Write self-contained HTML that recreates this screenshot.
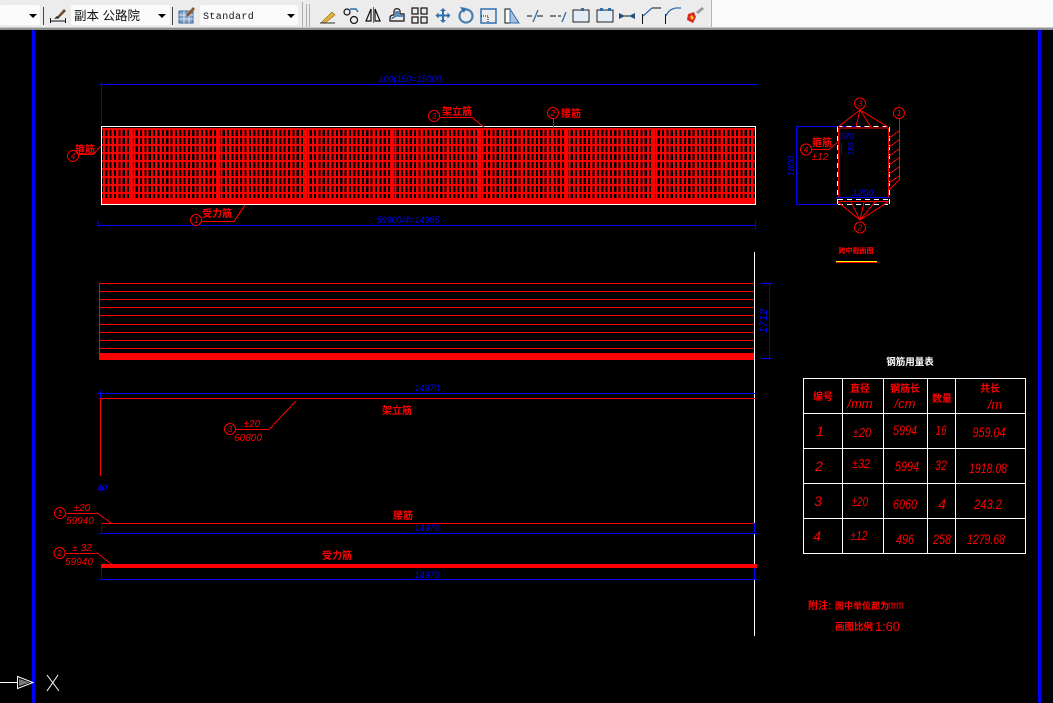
<!DOCTYPE html>
<html><head><meta charset="utf-8"><style>
html,body{margin:0;padding:0;background:#000;width:1053px;height:703px;overflow:hidden}
svg{display:block}
text{font-family:"Liberation Sans","Noto Sans CJK SC",sans-serif}
.cn{fill:#f00;font-weight:700;font-size:10px;text-anchor:middle}
.r{fill:#f00;font-style:italic;font-size:14px;text-anchor:middle}
.s{fill:#f00;font-style:italic;font-size:10px;text-anchor:middle}
.b{fill:#00f;font-style:italic;font-size:9px;text-anchor:middle}
.n{fill:none;stroke:#f00;stroke-width:1}
.bl{fill:none;stroke:#00f;stroke-width:1}
.w{fill:none;stroke:#fff;stroke-width:1}
.i{fill:none;stroke:#111;stroke-width:1.2}
.u{fill:none;stroke:#2f6fae;stroke-width:1.5}
</style></head><body>
<svg width="1053" height="703" viewBox="0 0 1053 703" xmlns="http://www.w3.org/2000/svg">
<rect width="1053" height="703" fill="#000"/>
<!-- toolbar -->
<rect width="1053" height="28" fill="#fafafa"/>
<rect width="712" height="27" fill="#ececec"/>
<rect x="711" y="0" width="1" height="27" fill="#b5b5b5"/>
<rect y="27" width="1053" height="1" fill="#c8c8c8"/>
<rect y="28" width="1053" height="2" fill="#8f8f8f"/>
<rect x="0" y="5" width="40" height="20" rx="2" fill="#fbfbfb"/>
<rect x="71" y="5" width="99" height="20" rx="2" fill="#fbfbfb"/>
<rect x="200" y="5" width="98" height="20" rx="2" fill="#fbfbfb"/>
<path d="M29 14h8l-4 4zM158 14h8l-4 4zM287 14h8l-4 4z" fill="#000"/>
<path d="M43.500 7v18M172.500 7v18" stroke="#444" fill="none"/>
<path d="M302.500 2v25M306.500 4v23M309.500 4v23" stroke="#b0b0b0" fill="none"/>
<text x="74" y="20" font-size="12.500" fill="#111">副本 公路院</text>
<text x="203" y="19" font-size="10" fill="#111" style="font-family:'Liberation Mono',monospace" letter-spacing=".4">Standard</text>
<!-- dim style icon -->
<path d="M50 21h15M50.500 18v5M65.500 18v5" stroke="#111" fill="none"/>
<path d="M56 18l8-9 2 2-8 8z" fill="#6b4a2b"/>
<path d="M54 19l3-3 2 2z" fill="#222"/>
<!-- table style icon -->
<rect x="179" y="11" width="14" height="12" fill="#7da1c9" stroke="#3a6a9c"/>
<path d="M179 15h14M179 19h14M184 11v12M189 11v12" stroke="#dce7f2" fill="none"/>
<path d="M186 15l7-8 2 2-7 8z" fill="#8a5a2b"/>
<!-- icons -->
<path d="M322 22l10-10 3 3-10 8z" fill="#e8b23a" stroke="#8a6a20" stroke-width=".6"/>
<path d="M320 23h15" stroke="#333" fill="none"/>
<circle cx="347" cy="12" r="3" class="i" stroke-width="1.6"/><circle cx="354" cy="20" r="3.500" class="i" stroke-width="1.6"/>
<path d="M350 9h6l2 3" class="u"/>
<path d="M366 21l5-12v12zM375 21V9l5 12z" class="i"/><path d="M373.500 7v16" stroke="#2f6fae" fill="none"/>
<path d="M390 21v-3c0-3 3-3 4-3v-4c0-3 6-3 6 0v3h4v7z" class="i"/><path d="M392 19c0-2 4-2 4-3v-4h2v4h5" class="u"/>
<g class="i"><rect x="412" y="8" width="6" height="6"/><rect x="421" y="8" width="6" height="6"/><rect x="412" y="17" width="6" height="6"/><rect x="421" y="17" width="6" height="6"/></g>
<path d="M443 8l3 3h-2v3.500h3.500v-2l3 3-3 3v-2H444V20h2l-3 3-3-3h2v-3.500h-3.500v2l-3-3 3-3v2H442V11h-2z" fill="#2f6fae"/>
<circle cx="466" cy="16" r="6.500" fill="none" stroke="#4a7fb5" stroke-width="2.200"/><path d="M460 7l6 1-2 5z" fill="#2f6fae"/>
<rect x="481" y="9" width="15" height="14" class="u" stroke-width="1"/><path d="M481 16h7v7" fill="none" stroke="#111" stroke-dasharray="1 1"/>
<rect x="505" y="9" width="5" height="14" fill="#fff" stroke="#111"/><path d="M510 9l9 14h-9z" fill="#a9c2dc" stroke="#2f6fae"/>
<path d="M527 16h5M537 16h6" stroke="#111" fill="none"/><path d="M533 22l5-12" stroke="#2f6fae" stroke-width="1.300" fill="none"/>
<path d="M550 16h6M558 16h3" stroke="#111" fill="none"/><path d="M562 22l4-10" stroke="#2f6fae" stroke-width="1.300" fill="none"/>
<rect x="573" y="10" width="16" height="12" fill="#e4edf5" stroke="#222"/><rect x="581" y="8" width="3" height="3" fill="#2f6fae"/>
<rect x="597" y="10" width="16" height="12" fill="#e4edf5" stroke="#222"/><rect x="600" y="8" width="3" height="3" fill="#2f6fae"/><rect x="608" y="8" width="3" height="3" fill="#2f6fae"/>
<path d="M619 16h16" stroke="#111" fill="none"/><path d="M619 13l6 3-6 3zM635 13l-6 3 6 3z" fill="#1f4f7f"/>
<path d="M642.500 24V14" stroke="#111" fill="none"/><path d="M652 8h9" stroke="#111" fill="none"/><path d="M643 16l9-8" stroke="#2f6fae" stroke-width="1.300" fill="none"/>
<path d="M665.500 24V14" stroke="#111" fill="none"/><path d="M666 16c2-5 5-7 10-8h5" stroke="#2f6fae" stroke-width="1.300" fill="none"/>
<path d="M688 14l6-2 2 5-3 6-6-3z" fill="#d92b1f"/><path d="M690 17l2-2 2 3-2 2z" fill="#f2c230"/><path d="M696 12l6-5 2 2-6 5z" fill="#999"/>

<!-- viewport borders -->
<rect x="32" y="30" width="3" height="673" fill="#00f"/>
<rect x="1038" y="30" width="3" height="673" fill="#00f"/>

<g shape-rendering="crispEdges">
<!-- top beam -->
<path d="M103 163H755" stroke="#f00" stroke-width="70" stroke-dasharray="2.200 2.150" fill="none"/>
<path stroke="#f00" stroke-width="2" fill="none" d="M102 129H755M102 137H755M102 145H755M102 153H755M102 161H755M102 169H755M102 177H755M102 185H755M102 193H755"/>
<path stroke="#f00" stroke-width="2" fill="none" d="M132 128v70M219 128v70M306 128v70M393 128v70M480 128v70M553 128v70M567 128v70M654 128v70"/>
<rect x="101" y="198" width="654" height="6" fill="#f00"/>
<rect x="101.500" y="126.500" width="654" height="78" fill="none" stroke="#fff"/>
<!-- top dims -->
<path class="bl" d="M99 84.500H757M101.500 82V126"/>
<path class="bl" d="M98 225.500H756M98 221v6M755.500 221v8"/>
<!-- second elevation -->
<path stroke="#f00" fill="none" d="M99 283.500H754M99 291.500H754M99 299.500H754M99 307.500H754M99 315.500H754M99 324.500H754M99 332.500H754M99 340.500H754M99 348.500H754M99.500 283V360"/>
<rect x="99" y="353" width="655" height="7" fill="#f00"/>
<path d="M754.500 252V636" stroke="#fff" fill="none"/>
<path class="bl" d="M761 283.500H772M761 358.500H772M769.500 283V359"/>
<!-- third -->
<path class="bl" d="M98 393.500H755M100.500 391v7"/>
<path class="n" d="M100 398.500H755M100.500 398V476"/>
<path class="n" d="M236 429.500H269"/>
<path d="M102 486v5" stroke="#00f" fill="none"/>
<!-- fourth -->
<path class="n" d="M101 523.500H754M66 513.500H98"/>
<path class="bl" d="M101.500 523V534M99 533.500H757M754.500 523V534"/>
<!-- fifth -->
<rect x="101" y="564" width="656" height="4" fill="#f00"/>
<path class="n" d="M66 553.500H98"/>
<path class="bl" d="M101.500 568V580M99 579.500H757M754.500 568V580"/>
<!-- table -->
<path class="w" d="M803.500 378.500H1025.500V553.500H803.500ZM803.500 413.500H1025.500M803.500 448.500H1025.500M803.500 483.500H1025.500M803.500 518.500H1025.500M842.500 378V554M883.500 378V554M927.500 378V554M955.500 378V554"/>
<!-- section -->
<path class="bl" d="M796.500 126V205M796 126.500H856M796 204.500H838M836 197.500H890M841.500 143V155"/>
<path class="n" d="M838.500 128V197M888.500 128V197M839 128H888M838 201.500H889"/>
<path d="M837.500 126.500H889.500M889.500 127V205M837.500 127V205M838 199.500H889M838 204.500H889" stroke="#fff" stroke-dasharray="5 4" fill="none"/>
<path d="M836 261.500H877" stroke="#ff0" fill="none"/><path d="M836 262.500H877" stroke="#f00" fill="none"/>
<!-- leader flat -->
<path class="n" d="M202 221.500H234M440 117.500H472M553.500 119V128M78 154.500H93M812 149.500H829M899.500 119V180"/>
</g>
<!-- diagonals -->
<g shape-rendering="crispEdges">
<path class="n" d="M269 429.500L296 401M98 513.500L111 523M98 553.500L111 564M234 221.500L245 205M472 117.500L484 127M93 154.500L101 146M829 149.500L839 141"/>
<path class="n" d="M860 110L838 127M860 110L856 127M860 110L871 127M860 110L888 127M860 220L838 202M860 220L851 202M860 220L864 202M860 220L875 202M860 220L888 202M899 180L889 190M889 138L899 131M889 147L899 140M889 156L899 149M889 165L899 158M889 174L899 167M889 183L899 176"/>
<g class="n">
<circle cx="230" cy="429" r="5.500"/><circle cx="60" cy="513" r="5.500"/><circle cx="59.500" cy="553" r="5.500"/>
<circle cx="196" cy="220" r="5.500"/><circle cx="434" cy="116" r="5.500"/><circle cx="553" cy="113" r="5.500"/><circle cx="73" cy="156" r="5.500"/>
<circle cx="860" cy="103.500" r="5.500"/><circle cx="899" cy="113" r="5.500"/><circle cx="860" cy="227.500" r="5.500"/><circle cx="806" cy="149.500" r="5.500"/>
</g>
</g>
<g class="s" style="font-size:8px">
<text x="230" y="432">3</text><text x="60" y="516">1</text><text x="59.500" y="556">2</text><text x="196" y="223">1</text><text x="434" y="119">3</text><text x="553" y="116">2</text><text x="73" y="159">4</text><text x="860" y="106.500">3</text><text x="899" y="116">1</text><text x="860" y="230.500">2</text><text x="806" y="152.500">4</text>
</g>
<!-- labels -->
<g class="cn">
<text x="457" y="115">架立筋</text><text x="571" y="117">腰筋</text><text x="85" y="153">箍筋</text><text x="217" y="217">受力筋</text>
<text x="397" y="414">架立筋</text><text x="403" y="519">腰筋</text><text x="337" y="559">受力筋</text><text x="822" y="146">箍筋</text>
</g>
<text x="856" y="253" fill="#f00" font-size="7" font-weight="700" text-anchor="middle">跨中截面图</text>
<g class="b">
<text x="410" y="82">100(150=15000</text><text x="408" y="223">59900/4=14985</text>
<text x="427" y="391">14970</text><text x="427" y="531">14970</text><text x="427" y="578">14970</text>
<text x="102" y="491">40</text>
</g>
<text x="863" y="196" fill="#00f" font-size="9.500" font-style="italic" text-anchor="middle">1200</text>
<text x="847" y="139" fill="#00f" font-size="8.500" font-style="italic" text-anchor="middle">370</text>
<text transform="translate(794,166) rotate(-90)" fill="#00f" font-size="9" font-style="italic" text-anchor="middle">1800</text>
<text transform="translate(854,149) rotate(-90)" fill="#00f" font-size="8" font-style="italic" text-anchor="middle">180</text>
<text transform="translate(767,321) rotate(-90)" fill="#00f" font-size="11" font-style="italic" text-anchor="middle">1712</text>
<g class="s">
<text x="252" y="427">±20</text><text x="248" y="441">60800</text>
<text x="82" y="511">±20</text><text x="80" y="524">59940</text>
<text x="82" y="551">± 32</text><text x="79" y="565">59940</text>
<text x="820" y="160">±12</text>
</g>
<!-- table text -->
<text x="910" y="365" fill="#fff" font-size="9.500" font-weight="700" text-anchor="middle">钢筋用量表</text>
<g class="cn">
<text x="823" y="400">编号</text><text x="860" y="392">直径</text><text x="905" y="392">钢筋长</text><text x="942" y="402">数量</text><text x="990" y="392">共长</text>
</g>
<g fill="#f00" font-size="13" text-anchor="middle">
<text x="860" y="408" font-style="italic">/mm</text><text x="905" y="408" font-style="italic">/cm</text><text x="995" y="409" font-style="italic">/m</text>
</g>
<g class="r">
<text x="820" y="436">1</text><text x="819" y="471">2</text><text x="818" y="506">3</text><text x="817" y="541">4</text>
<text x="905" y="435" textLength="24" lengthAdjust="spacingAndGlyphs">5994</text><text x="907" y="471" textLength="24" lengthAdjust="spacingAndGlyphs">5994</text><text x="905" y="509" textLength="24" lengthAdjust="spacingAndGlyphs">6060</text><text x="905" y="544" textLength="18" lengthAdjust="spacingAndGlyphs">496</text>
<text x="941" y="435" textLength="11" lengthAdjust="spacingAndGlyphs">16</text><text x="941" y="470" textLength="12" lengthAdjust="spacingAndGlyphs">32</text><text x="942" y="509">4</text><text x="942" y="544" textLength="18" lengthAdjust="spacingAndGlyphs">258</text>
<text x="989" y="437" textLength="33" lengthAdjust="spacingAndGlyphs">959.04</text><text x="988" y="473" textLength="38" lengthAdjust="spacingAndGlyphs">1918.08</text><text x="988" y="509" textLength="28" lengthAdjust="spacingAndGlyphs">243.2</text><text x="986" y="544" textLength="38" lengthAdjust="spacingAndGlyphs">1279.68</text>
</g>
<g class="s" style="font-size:13px">
<text x="862" y="437" textLength="18" lengthAdjust="spacingAndGlyphs">±20</text><text x="861" y="468" textLength="18" lengthAdjust="spacingAndGlyphs">±32</text><text x="860" y="506" textLength="16" lengthAdjust="spacingAndGlyphs">±20</text><text x="859" y="540" textLength="17" lengthAdjust="spacingAndGlyphs">±12</text>
</g>
<!-- notes -->
<text x="808" y="609" fill="#f00" font-size="10" font-weight="700">附注:</text>
<text x="835" y="609" fill="#f00" font-size="9" font-weight="700">图中单位都为</text>
<text x="888" y="609" fill="#f00" font-size="12" textLength="16" lengthAdjust="spacingAndGlyphs">mm</text>
<text x="835" y="630" fill="#f00" font-size="9.500" font-weight="700">画图比例</text>
<text x="875" y="631" fill="#f00" font-size="13" textLength="25">1:60</text>
<!-- UCS -->
<path d="M0 682.500H17M17.500 676.500V688.500L33 682.500Z" fill="none" stroke="#fff"/>
<path d="M19 679l11 3.500-11 3.500z" fill="#777"/>
<path d="M47 675l12 16M58 675l-11 16" stroke="#fff" fill="none"/>
</svg>
</body></html>
